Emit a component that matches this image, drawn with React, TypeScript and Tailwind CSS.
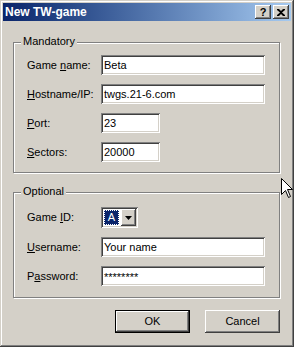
import React from 'react';

const face = 'bg-[#D4D0C8]';
const sunken =
  'shadow-[inset_1px_1px_0_#808080,inset_-1px_-1px_0_#ffffff,inset_2px_2px_0_#404040,inset_-2px_-2px_0_#D4D0C8]';
const raised =
  'shadow-[inset_-1px_-1px_0_#404040,inset_1px_1px_0_#ffffff,inset_-2px_-2px_0_#808080,inset_2px_2px_0_#D4D0C8]';

function Group({ title, className, children }: { title: string; className: string; children: React.ReactNode }) {
  return (
    <div className={`relative border border-[#808080] shadow-[inset_1px_1px_0_#ffffff,1px_1px_0_#ffffff] ${className}`}>
      <span className={`absolute -top-[8px] left-[7px] px-[2px] leading-[13px] ${face}`}>{title}</span>
      {children}
    </div>
  );
}

function Row({ label, children }: { label: React.ReactNode; children: React.ReactNode }) {
  return (
    <div className="flex items-center">
      <div className="w-[74px] shrink-0">{label}</div>
      {children}
    </div>
  );
}

function TextBox({ value, width = 'w-[164px]', small = false }: { value: string; width?: string; small?: boolean }) {
  return (
    <div className={`${width} h-[20px] bg-white ${sunken} flex items-center pl-[3px] ${small ? 'pt-[2px]' : ''}`}>
      <span className="leading-none text-black">{value}</span>
    </div>
  );
}

export default function App() {
  return (
    <div
      className={`w-[294px] h-[347px] ${face} p-[3px] text-[11px] text-black shadow-[inset_-1px_-1px_0_#404040,inset_1px_1px_0_#D4D0C8,inset_-2px_-2px_0_#808080,inset_2px_2px_0_#ffffff] relative`}
      style={{ fontFamily: '"Liberation Sans", Arial, sans-serif' }}
    >
      {/* title bar */}
      <div className="h-[18px] flex items-center justify-between bg-gradient-to-r from-[#0A246A] to-[#A6CAF0] pl-[2px] pr-[2px]">
        <span className="text-white font-bold text-[12px] leading-none">New TW-game</span>
        <div className="flex items-center">
          <div className={`w-[16px] h-[14px] ${face} ${raised} flex items-center justify-center`}>
            <span className="font-bold text-[11px] leading-none">?</span>
          </div>
          <div className={`ml-[2px] w-[16px] h-[14px] ${face} ${raised} flex items-center justify-center`}>
            <svg width="8" height="7" viewBox="0 0 8 7">
              <path d="M0 0h2l2 2 2-2h2v1L5 3.5 8 6v1H6L4 5 2 7H0V6l3-2.5L0 1z" fill="#000" />
            </svg>
          </div>
        </div>
      </div>

      <div className="pl-[10px] pr-[11px]">
        <Group title="Mandatory" className="mt-[21px] h-[131px] pt-[12px] pl-[13px]">
          <div className="flex flex-col gap-[9px]">
            <Row label={<>Game <u>n</u>ame:</>}>
              <TextBox value="Beta" />
            </Row>
            <Row label={<><u>H</u>ostname/IP:</>}>
              <TextBox value="twgs.21-6.com" />
            </Row>
            <Row label={<><u>P</u>ort:</>}>
              <TextBox value="23" width="w-[59px]" />
            </Row>
            <Row label={<><u>S</u>ectors:</>}>
              <TextBox value="20000" width="w-[59px]" />
            </Row>
          </div>
        </Group>

        <Group title="Optional" className="mt-[19px] h-[106px] pt-[14px] pl-[13px]">
          <div className="flex flex-col gap-[9px]">
            <Row label={<>Game <u>I</u>D:</>}>
              <div className={`w-[37px] h-[21px] bg-white ${sunken} p-[2px] flex`}>
                <div className="m-[1px] w-[15px] bg-[#0A246A] border border-dotted border-white flex items-center justify-center">
                  <span className="text-white leading-none">A</span>
                </div>
                <div className={`ml-auto w-[15px] h-[17px] ${face} ${raised} flex items-center justify-center`}>
                  <svg width="7" height="4" viewBox="0 0 7 4">
                    <path d="M0 0h7L3.5 4z" fill="#000" />
                  </svg>
                </div>
              </div>
            </Row>
            <Row label={<><u>U</u>sername:</>}>
              <TextBox value="Your name" />
            </Row>
            <Row label={<>P<u>a</u>ssword:</>}>
              <TextBox value="********" small />
            </Row>
          </div>
        </Group>

        <div className="mt-[12px] flex justify-end gap-[15px]">
          <div className="w-[75px] h-[23px] border border-black">
            <div className={`w-full h-full ${face} ${raised} flex items-center justify-center`}>OK</div>
          </div>
          <div className={`w-[75px] h-[23px] ${face} ${raised} flex items-center justify-center`}>Cancel</div>
        </div>
      </div>

      {/* mouse pointer */}
      <svg className="absolute left-[281px] top-[178px]" width="13" height="21" viewBox="0 0 13 21">
        <path d="M0.5 0.5V16.5L4.5 12.5L7.5 19.5L9.5 18.5L6.5 11.5H11.5Z" fill="#fff" stroke="#000" strokeWidth="1" />
      </svg>
    </div>
  );
}
